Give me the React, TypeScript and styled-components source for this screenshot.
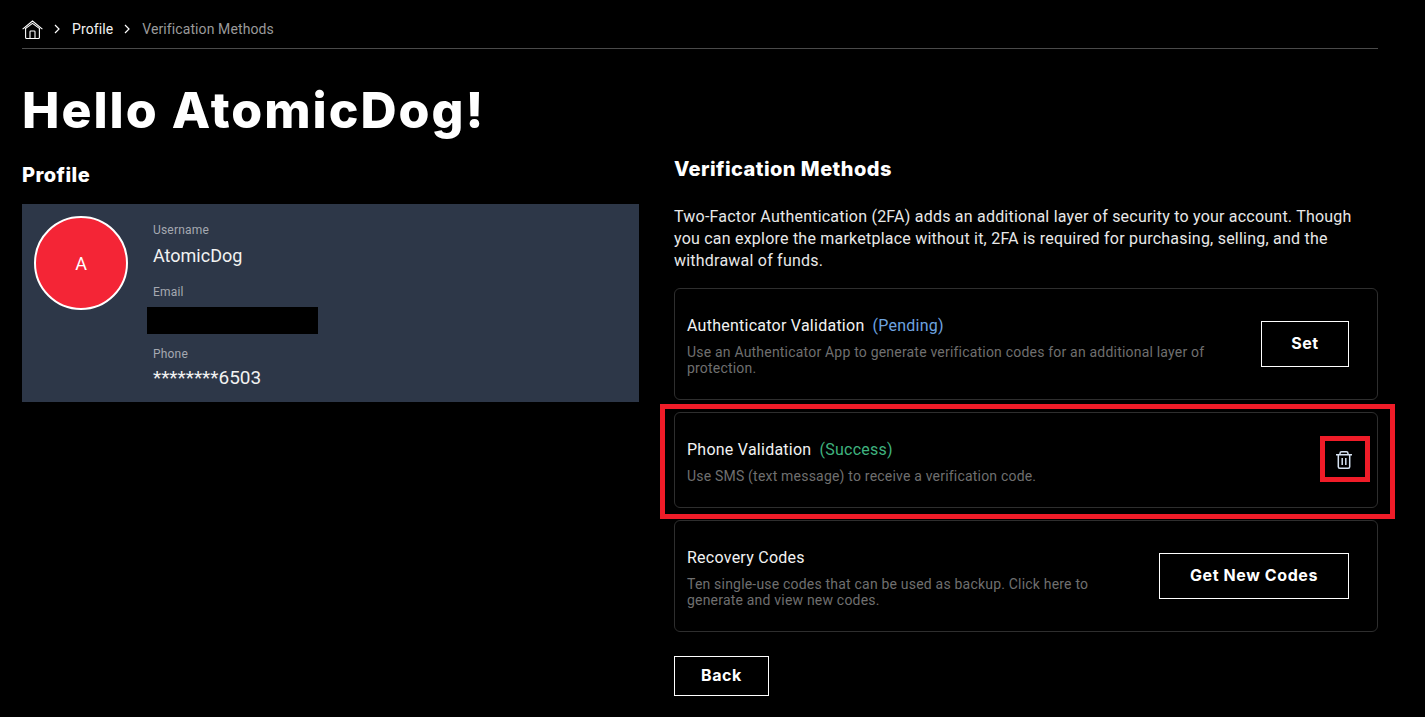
import React from "react";
import styled, { createGlobalStyle } from "styled-components";

const GlobalStyle = createGlobalStyle`
  html, body {
    margin: 0;
    padding: 0;
    background: #000;
    color: #fff;
    font-family: "Roboto", "Liberation Sans", sans-serif;
  }
  * { box-sizing: border-box; }
`;

const Page = styled.div`
  width: 1425px;
  height: 717px;
  overflow: hidden;
  padding: 18px 47px 0 22px;
  background: #000;
`;

const Breadcrumbs = styled.nav`
  display: flex;
  align-items: center;
  height: 31px;
  padding-bottom: 8px;
  border-bottom: 1px solid #4a4a4a;
  font-size: 14px;
  letter-spacing: 0.1px;
`;

const Crumb = styled.span<{ $muted?: boolean }>`
  color: ${(p) => (p.$muted ? "#9a9a9a" : "#f2f2f2")};
`;

const Chevron = styled.svg`
  margin: 0 11px 0 10px;
  width: 8px;
  height: 10px;
  flex: none;
`;

const Title = styled.h1`
  margin: 31px 0 8px;
  height: 60px;
  font-family: "Inter", sans-serif;
  font-size: 50px;
  line-height: 60px;
  font-weight: 800;
  letter-spacing: 2px;
`;

const Columns = styled.div`
  display: grid;
  grid-template-columns: 617px 704px;
  column-gap: 35px;
`;

const LeftHeading = styled.h2`
  margin: 14px 0 16px;
  font-family: "Inter", sans-serif;
  font-size: 20px;
  line-height: 26px;
  font-weight: 800;
  letter-spacing: 0.45px;
`;

const RightHeading = styled(LeftHeading)`
  margin: 8px 0 24px;
`;

const ProfileCard = styled.section`
  display: flex;
  height: 198px;
  padding: 12px 12px 0;
  background: #2d3748;
`;

const Avatar = styled.div`
  width: 94px;
  height: 94px;
  flex: none;
  display: flex;
  align-items: center;
  justify-content: center;
  border-radius: 50%;
  border: 2px solid #fff;
  background: #f42536;
  font-size: 18px;
`;

const ProfileFields = styled.div`
  margin-left: 25px;
  padding-top: 7px;
`;

const FieldLabel = styled.div`
  font-size: 12px;
  line-height: 14px;
  letter-spacing: 0.2px;
  color: #a5a9b1;
`;

const UserValue = styled.div`
  margin: 7px 0 17px;
  font-size: 18px;
  line-height: 24px;
  color: #f2f2f2;
`;

const PhoneValue = styled.div`
  margin-top: 5px;
  font-size: 19px;
  line-height: 24px;
  color: #f2f2f2;
`;

const Redacted = styled.div`
  width: 171px;
  height: 27px;
  margin: 8px 0 13px -6px;
  background: #000;
`;

const Intro = styled.p`
  margin: 0 0 16px;
  font-size: 16px;
  line-height: 22px;
  letter-spacing: 0.22px;
  color: #e8e8e8;
`;

const Methods = styled.div`
  display: flex;
  flex-direction: column;
  gap: 12px;
`;

const MethodCard = styled.div<{ $h: number }>`
  position: relative;
  display: flex;
  align-items: center;
  justify-content: space-between;
  gap: 20px;
  height: ${(p) => p.$h}px;
  padding: 0 28px 0 12px;
  border: 1px solid #2e2e2e;
  border-radius: 6px;
`;

const MethodText = styled.div`
  flex: 1;
  padding-top: 2px;
`;

const MethodTitle = styled.div`
  font-size: 16px;
  line-height: 22px;
  letter-spacing: 0.25px;
  color: #f2f2f2;
`;

const Status = styled.span<{ $color: string }>`
  margin-left: 8px;
  color: ${(p) => p.$color};
`;

const MethodDesc = styled.div`
  margin-top: 7px;
  font-size: 14px;
  line-height: 16px;
  letter-spacing: 0.2px;
  color: #6f6f6f;
`;

const OutlineButton = styled.button<{ $w: number }>`
  flex: none;
  width: ${(p) => p.$w}px;
  height: 46px;
  padding: 0 0 2px;
  background: transparent;
  border: 1px solid #fff;
  color: #fff;
  font-family: "Inter", sans-serif;
  font-size: 16px;
  font-weight: 700;
  letter-spacing: 0.6px;
`;

const BackButton = styled(OutlineButton)`
  display: block;
  height: 40px;
  margin-top: 24px;
`;

const IconButton = styled.button`
  display: flex;
  padding: 0;
  margin-right: -3px;
  background: none;
  border: 0;
`;

const HighlightOuter = styled.div`
  position: absolute;
  left: -15px;
  top: -9px;
  width: 735px;
  height: 115px;
  border: 5px solid #f01c28;
  pointer-events: none;
`;

const HighlightInner = styled.div`
  position: absolute;
  left: 645px;
  top: 23px;
  width: 50px;
  height: 46px;
  border: 5px solid #f01c28;
  pointer-events: none;
`;

const HomeIcon = () => (
  <svg width="21" height="19" viewBox="0 0 21 19" fill="none" stroke="#fff" strokeWidth="1.1" style={{ flex: "none" }}>
    <path d="M.6 9.2 10.5 1l9.9 8.2M3 8.9 10.5 3.4 18 8.9M3.6 8.6v8.9q0 1 1 1h11.8q1 0 1-1V8.6M8 18.4v-6.6q0-.8.8-.8h3.4q.8 0 .8.8v6.6" />
  </svg>
);

const Separator = () => (
  <Chevron viewBox="0 0 8 10" fill="none" stroke="#fff" strokeWidth="1.2">
    <path d="M2 1l4 4-4 4" />
  </Chevron>
);

const TrashIcon = () => (
  <svg width="16" height="18" viewBox="0 0 16 18" fill="none" stroke="#d5e2f2" strokeWidth="1.5">
    <path d="M0 3.8h16M4 3.8V2.4q0-1.6 1.6-1.6h4.8q1.6 0 1.6 1.6v1.4M2.3 3.8v11.9q0 1.5 1.5 1.5h8.4q1.5 0 1.5-1.5V3.8M6.2 7v7M9.8 7v7" />
  </svg>
);

export default function App() {
  return (
    <Page>
      <GlobalStyle />
      <Breadcrumbs>
        <HomeIcon />
        <Separator />
        <Crumb>Profile</Crumb>
        <Separator />
        <Crumb $muted>Verification Methods</Crumb>
      </Breadcrumbs>
      <Title>Hello AtomicDog!</Title>
      <Columns>
        <div>
          <LeftHeading>Profile</LeftHeading>
          <ProfileCard>
            <Avatar>A</Avatar>
            <ProfileFields>
              <FieldLabel>Username</FieldLabel>
              <UserValue>AtomicDog</UserValue>
              <FieldLabel>Email</FieldLabel>
              <Redacted />
              <FieldLabel>Phone</FieldLabel>
              <PhoneValue>********6503</PhoneValue>
            </ProfileFields>
          </ProfileCard>
        </div>
        <div>
          <RightHeading>Verification Methods</RightHeading>
          <Intro>
            Two-Factor Authentication (2FA) adds an additional layer of security to your account. Though
            you can explore the marketplace without it, 2FA is required for purchasing, selling, and the
            withdrawal of funds.
          </Intro>
          <Methods>
            <MethodCard $h={112}>
              <MethodText>
                <MethodTitle>
                  Authenticator Validation<Status $color="#6ea4e0">(Pending)</Status>
                </MethodTitle>
                <MethodDesc>
                  Use an Authenticator App to generate verification codes for an additional layer of protection.
                </MethodDesc>
              </MethodText>
              <OutlineButton $w={88}>Set</OutlineButton>
            </MethodCard>
            <MethodCard $h={96}>
              <MethodText>
                <MethodTitle>
                  Phone Validation<Status $color="#3fb27f">(Success)</Status>
                </MethodTitle>
                <MethodDesc>Use SMS (text message) to receive a verification code.</MethodDesc>
              </MethodText>
              <IconButton aria-label="Delete">
                <TrashIcon />
              </IconButton>
              <HighlightOuter />
              <HighlightInner />
            </MethodCard>
            <MethodCard $h={112}>
              <MethodText>
                <MethodTitle>Recovery Codes</MethodTitle>
                <MethodDesc>
                  Ten single-use codes that can be used as backup. Click here to generate and view new codes.
                </MethodDesc>
              </MethodText>
              <OutlineButton $w={190}>Get New Codes</OutlineButton>
            </MethodCard>
          </Methods>
          <BackButton $w={95}>Back</BackButton>
        </div>
      </Columns>
    </Page>
  );
}
